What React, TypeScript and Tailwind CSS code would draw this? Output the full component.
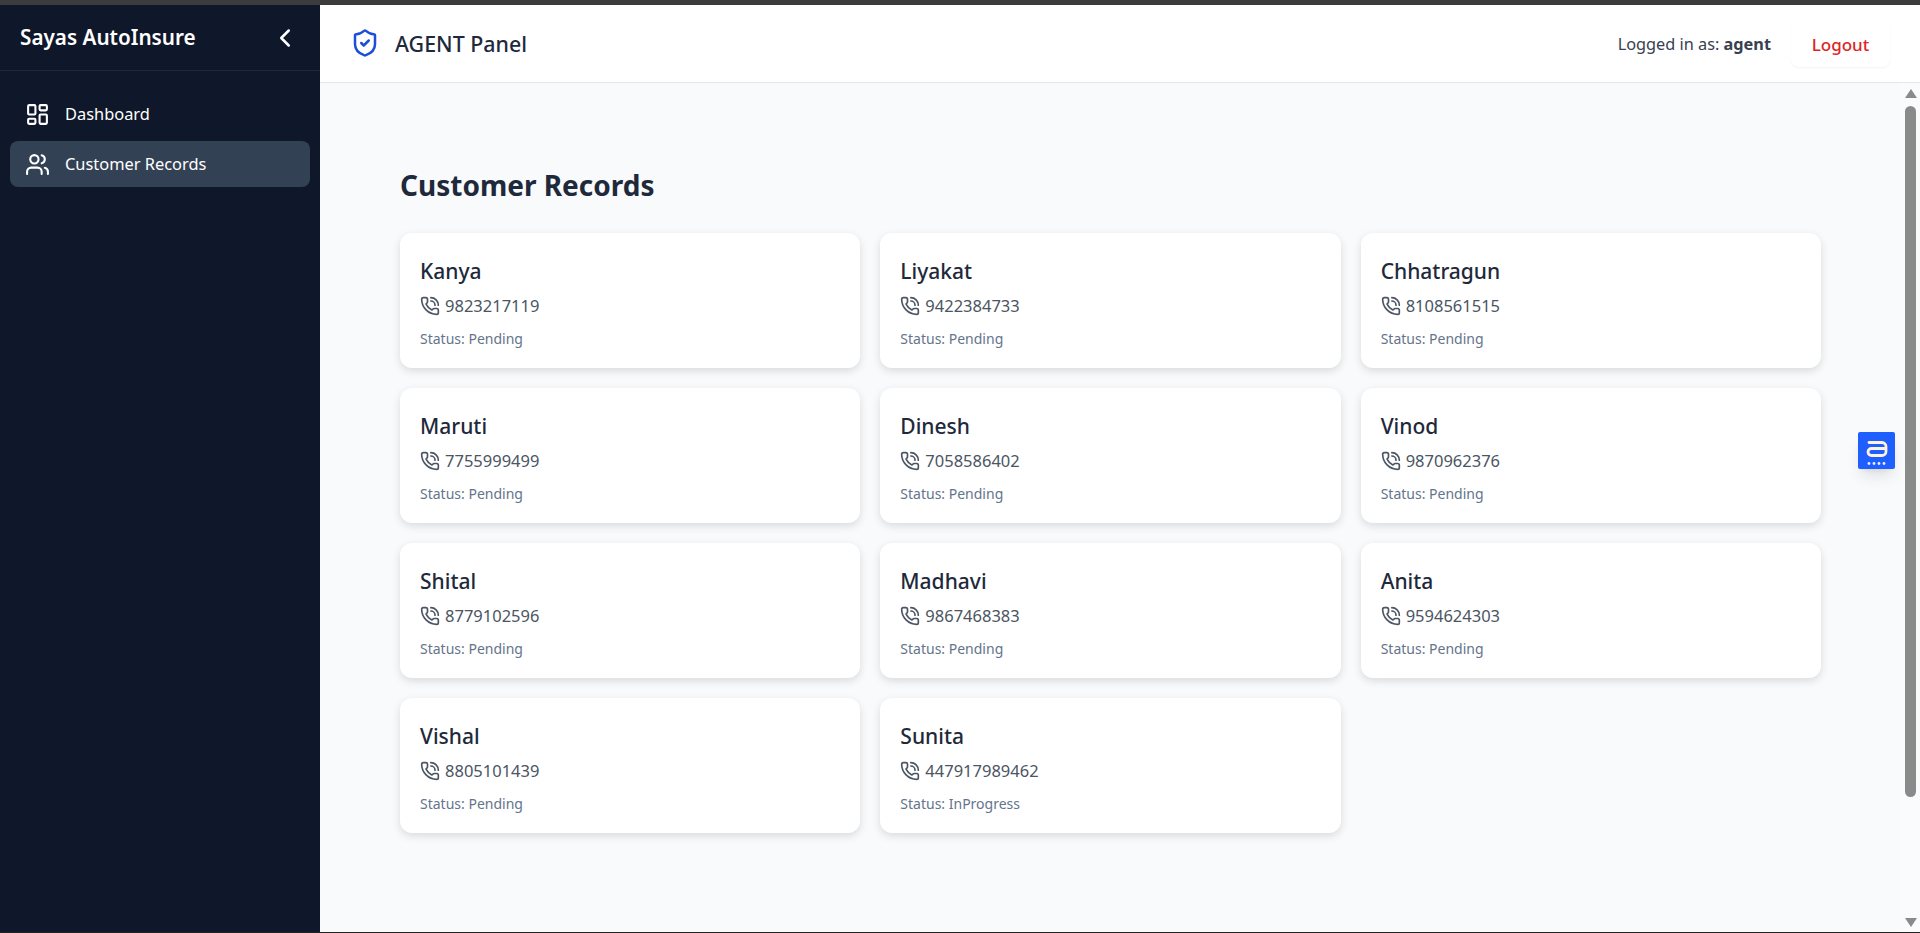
import { ChevronLeft, LayoutDashboard, PhoneCall, ShieldCheck, Users } from "lucide-react";

interface CustomerRecord {
  name: string;
  phone: string;
  status: string;
}

const records: CustomerRecord[] = [
  { name: "Kanya", phone: "9823217119", status: "Pending" },
  { name: "Liyakat", phone: "9422384733", status: "Pending" },
  { name: "Chhatragun", phone: "8108561515", status: "Pending" },
  { name: "Maruti", phone: "7755999499", status: "Pending" },
  { name: "Dinesh", phone: "7058586402", status: "Pending" },
  { name: "Vinod", phone: "9870962376", status: "Pending" },
  { name: "Shital", phone: "8779102596", status: "Pending" },
  { name: "Madhavi", phone: "9867468383", status: "Pending" },
  { name: "Anita", phone: "9594624303", status: "Pending" },
  { name: "Vishal", phone: "8805101439", status: "Pending" },
  { name: "Sunita", phone: "447917989462", status: "InProgress" },
];

const Sidebar: React.FC = () => (
  <aside className="w-[320px] shrink-0 bg-[#0f172a] text-white">
    <div className="flex h-[66px] items-center justify-between border-b border-[#1e293b] pl-5 pr-[20px]">
      <span className="mt-px text-[20.7px] font-semibold">Sayas AutoInsure</span>
      <ChevronLeft size={30} strokeWidth={2} />
    </div>
    <nav className="flex flex-col gap-[4px] px-[10px] pt-[20px]">
      <a className="flex h-[46px] items-center gap-[15px] rounded-lg px-[15px] text-[16.4px]">
        <LayoutDashboard size={25} strokeWidth={2} />
        Dashboard
      </a>
      <a className="flex h-[46px] items-center gap-[15px] rounded-lg bg-[#334155] px-[15px] text-[16.4px]">
        <Users size={25} strokeWidth={2} />
        Customer Records
      </a>
    </nav>
  </aside>
);

const Header: React.FC = () => (
  <header className="flex h-[78px] shrink-0 items-center justify-between border-b border-[#e5e7eb] bg-white px-[30px]">
    <div className="flex items-center gap-[15px]">
      <ShieldCheck size={30} strokeWidth={2} className="text-[#1d4ed8]" />
      <span className="mt-[2px] text-[21.4px] font-medium text-[#1e293b]">AGENT Panel</span>
    </div>
    <div className="flex items-center gap-[20px]">
      <span className="mt-[2px] text-[16.3px] text-[#374151]">
        Logged in as: <span className="font-bold">agent</span>
      </span>
      <button className="h-[47px] w-[99px] rounded-lg bg-white pt-[2px] text-[17px] font-medium text-[#dc2626] shadow-[0_1px_2px_rgba(0,0,0,0.05)]">
        Logout
      </button>
    </div>
  </header>
);

const RecordCard: React.FC<{ record: CustomerRecord }> = ({ record }) => (
  <div className="h-[135px] rounded-xl bg-white px-5 pt-[24px] shadow-[0_3px_8px_rgba(0,0,0,0.13)]">
    <h3 className="text-[21px] font-medium leading-[28px] text-[#1e293b]">{record.name}</h3>
    <p className="mt-[9px] flex items-center gap-[5px] text-[16.5px] leading-[24px] text-[#4b5563]">
      <PhoneCall size={20} strokeWidth={2} />
      {record.phone}
    </p>
    <p className="mt-[11px] text-[14px] leading-[20px] text-[#64748b]">Status: {record.status}</p>
  </div>
);

const Scrollbar: React.FC = () => (
  <div className="flex w-[19px] shrink-0 flex-col items-center bg-[#fafbfc]">
    <div className="mt-[6px] h-0 w-0 border-x-[6px] border-b-[9px] border-x-transparent border-b-[#8a8a8a]" />
    <div className="mt-[8px] h-[691px] w-[11px] rounded-full bg-[#8a8a8a]" />
    <div className="mt-[121px] h-0 w-0 border-x-[6px] border-t-[9px] border-x-transparent border-t-[#8a8a8a]" />
  </div>
);

const FloatingBadge: React.FC = () => (
  <div className="absolute right-[25px] top-[432px] h-[37px] w-[37px] rounded-[2px] bg-[#1f5eff] shadow-lg">
    <svg width="37" height="37" viewBox="0 0 37 37" fill="none">
      <path
        d="M11 10.5H24a4 4 0 0 1 4 4V19.5a4 4 0 0 1-4 4H13.5a3.5 3.5 0 0 1 0-7H28"
        stroke="#fdf3d8"
        strokeWidth="2.8"
        strokeLinecap="round"
      />
      <circle cx="11" cy="31.5" r="1.4" fill="#e8efff" />
      <circle cx="16" cy="31.5" r="1.4" fill="#e8efff" />
      <circle cx="21" cy="31.5" r="1.4" fill="#e8efff" />
      <circle cx="26" cy="31.5" r="1.4" fill="#e8efff" />
    </svg>
  </div>
);

const App: React.FC = () => (
  <div className="relative flex h-screen flex-col overflow-hidden bg-[#f9fafb] font-['Noto_Sans',sans-serif]">
    <div className="h-[5px] shrink-0 bg-[#3c3c3c]" />
    <div className="flex min-h-0 flex-1">
      <Sidebar />
      <div className="flex min-w-0 flex-1 flex-col">
        <Header />
        <div className="flex min-h-0 flex-1">
          <main className="flex-1 px-[80px] pt-[82px]">
            <h1 className="mb-[28px] text-[28px] font-bold leading-[40px] text-[#1e293b]">Customer Records</h1>
            <div className="grid grid-cols-3 gap-5">
              {records.map((record) => (
                <RecordCard key={record.name} record={record} />
              ))}
            </div>
          </main>
          <Scrollbar />
        </div>
      </div>
    </div>
    <div className="h-px shrink-0 bg-[#222]" />
    <FloatingBadge />
  </div>
);

export default App;
